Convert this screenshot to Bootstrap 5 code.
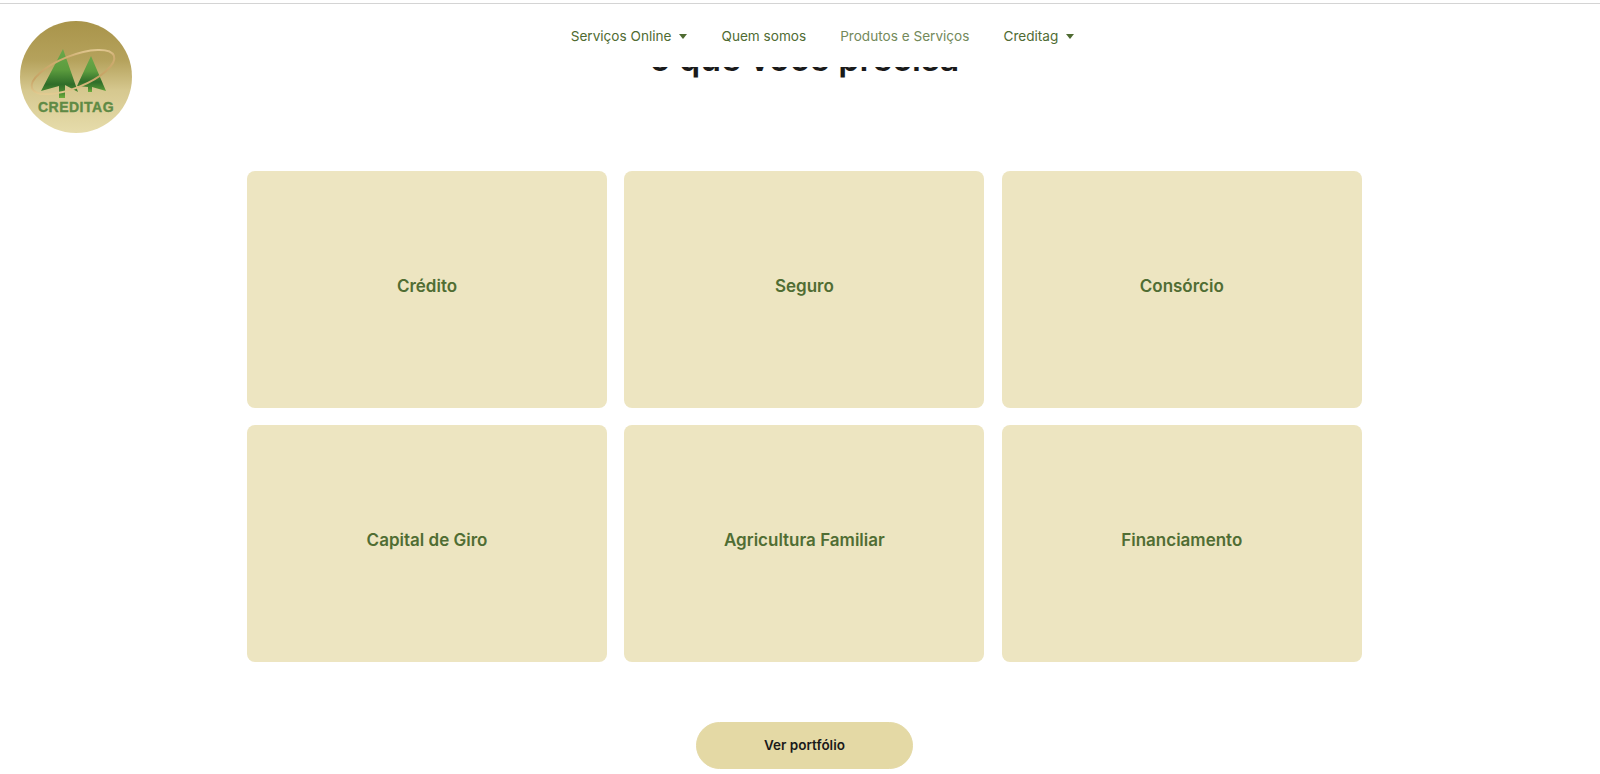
<!DOCTYPE html>
<html lang="pt-BR">
<head>
<meta charset="utf-8">
<title>Creditag</title>
<link href="https://cdn.jsdelivr.net/npm/bootstrap@5.3.0/dist/css/bootstrap.min.css" rel="stylesheet">
<style>
html,body{height:774px;overflow:hidden;}
body{font-family:Inter,"Liberation Sans",sans-serif;background:#fff;color:#1a1a1a;}
.top-edge{height:4px;background:#fff;border-bottom:1px solid #d4d4d4;}
.head-bar{position:absolute;top:4px;left:0;right:0;height:63px;background:#fff;z-index:5;}
.logo-spot{position:absolute;left:20px;top:20px;width:112px;height:114px;z-index:6;}
.menu-row{padding-top:15px;padding-left:45px;gap:34px;}
.menu-row .nav-link{color:#4f6b32;font-size:13.6px;line-height:22px;padding:6px 0;}
.menu-row .nav-link.current{color:#73895a;}
.menu-row .dropdown-toggle::after{margin-left:8px;vertical-align:2px;border-top-width:5px;border-left-width:4.5px;border-right-width:4.5px;}
.page-field{padding-left:9px;}
.page-title{font-size:34px;font-weight:600;line-height:40px;margin:0;padding-top:35px;height:167px;color:#1a1a1a;}
.tile-grid{width:1115px;display:grid;grid-template-columns:repeat(3,360px);gap:17px 17.4px;}
.tile{height:237px;background:#ede5c1;border-radius:8px;color:#506d33;font-size:17px;font-weight:600;padding-bottom:5px;}
.more-btn{--bs-btn-bg:#e4d9a5;--bs-btn-border-color:#e4d9a5;--bs-btn-hover-bg:#e4d9a5;--bs-btn-hover-border-color:#e4d9a5;--bs-btn-color:#1a1a1a;--bs-btn-hover-color:#1a1a1a;width:217px;height:47px;border-radius:24px;font-size:13.5px;font-weight:600;margin-top:60px;}
</style>
</head>
<body class="position-relative">
<div class="top-edge"></div>
<header class="head-bar">
  <ul class="nav justify-content-center menu-row">
    <li class="nav-item dropdown"><a class="nav-link dropdown-toggle" href="#" data-bs-toggle="dropdown">Serviços Online</a></li>
    <li class="nav-item"><a class="nav-link" href="#">Quem somos</a></li>
    <li class="nav-item"><a class="nav-link current" href="#">Produtos e Serviços</a></li>
    <li class="nav-item dropdown"><a class="nav-link dropdown-toggle" href="#" data-bs-toggle="dropdown">Creditag</a></li>
  </ul>
</header>
<svg class="logo-spot" viewBox="0 0 112 114" aria-label="Creditag">
  <defs>
    <linearGradient id="disc" x1="0" y1="0" x2="0" y2="1">
      <stop offset="0" stop-color="#a9944a"/><stop offset=".35" stop-color="#b5a25c"/><stop offset=".62" stop-color="#d6c88f"/><stop offset="1" stop-color="#e6dcab"/>
    </linearGradient>
    <linearGradient id="treeShade" x1="0" y1="0" x2="0" y2="1">
      <stop offset="0" stop-color="#6aa84a"/><stop offset=".42" stop-color="#5c9c3e"/><stop offset=".72" stop-color="#2f6d29"/><stop offset=".9" stop-color="#4c8c33"/><stop offset="1" stop-color="#6fb03c"/>
    </linearGradient>
    <linearGradient id="ring" x1="0" y1="1" x2="1" y2="0">
      <stop offset="0" stop-color="#f2e2ab"/><stop offset=".4" stop-color="#c6a365"/><stop offset=".75" stop-color="#d0ae72"/><stop offset="1" stop-color="#f6e8b8"/>
    </linearGradient>
  </defs>
  <circle cx="56" cy="57" r="56" fill="url(#disc)"/>
  <path d="M43 29 L21 71 L39 66 L39 78 L45 78 L45 65 L58 72 Z" fill="url(#treeShade)"/>
  <path d="M71 36 L57 66 L68 67 L68 72 L72 72 L72 67 L86 71 Z" fill="url(#treeShade)"/>
  <ellipse cx="53" cy="52" rx="44" ry="16" transform="rotate(-21.7 53 52)" fill="none" stroke="url(#ring)" stroke-width="2"/>
  <text x="56" y="92" text-anchor="middle" font-family="Liberation Sans" font-weight="700" font-size="14" letter-spacing=".5" stroke="#5f8a45" stroke-width=".4" fill="#5f8a45">CREDITAG</text>
</svg>
<main class="d-flex flex-column align-items-center page-field">
  <h2 class="page-title text-center w-100">o que você precisa</h2>
  <div class="tile-grid">
    <div class="tile d-flex align-items-center justify-content-center">Crédito</div>
    <div class="tile d-flex align-items-center justify-content-center">Seguro</div>
    <div class="tile d-flex align-items-center justify-content-center">Consórcio</div>
    <div class="tile d-flex align-items-center justify-content-center">Capital de Giro</div>
    <div class="tile d-flex align-items-center justify-content-center">Agricultura Familiar</div>
    <div class="tile d-flex align-items-center justify-content-center">Financiamento</div>
  </div>
  <a class="btn more-btn d-flex align-items-center justify-content-center" href="#">Ver portfólio</a>
</main>
<script src="https://cdn.jsdelivr.net/npm/bootstrap@5.3.0/dist/js/bootstrap.bundle.min.js"></script>
</body>
</html>
